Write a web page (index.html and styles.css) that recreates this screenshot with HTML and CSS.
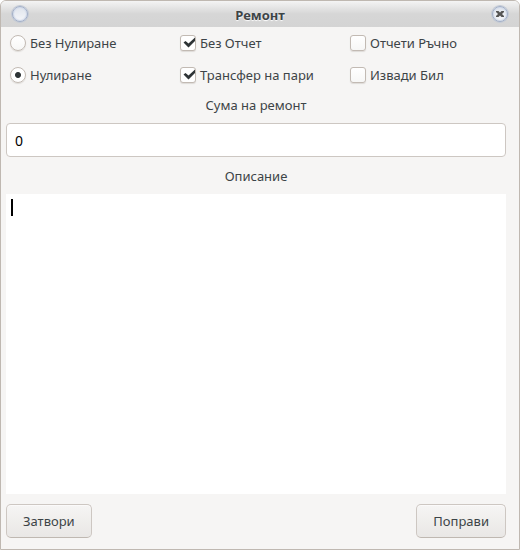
FILE: index.html
```html
<!DOCTYPE html>
<html lang="bg">
<head>
<meta charset="utf-8">
<title>Ремонт</title>
<link rel="stylesheet" href="styles.css">
</head>
<body>
<main class="window">
  <header class="titlebar">
    <button class="orb" type="button" aria-label="Меню"></button>
    <h1 class="title">Ремонт</h1>
    <button class="orb" type="button" aria-label="Затвори прозореца">
      <svg class="cross" viewBox="0 0 8 8" aria-hidden="true"><path d="M0 1H2.500L4 2.500L5.500 1H8V2L6 4L8 6V7H5.500L4 5.500L2.500 7H0V6L2 4L0 2Z"/></svg>
    </button>
  </header>
  <form class="form">
    <div class="options">
      <label class="option"><input class="mark radio" type="radio" name="reset">Без Нулиране</label>
      <label class="option"><input class="mark check" type="checkbox" checked>Без Отчет</label>
      <label class="option"><input class="mark check" type="checkbox">Отчети Ръчно</label>
      <label class="option"><input class="mark radio" type="radio" name="reset" checked>Нулиране</label>
      <label class="option"><input class="mark check" type="checkbox" checked>Трансфер на пари</label>
      <label class="option"><input class="mark check" type="checkbox">Извади Бил</label>
    </div>
    <label class="caption" for="amount">Сума на ремонт</label>
    <input class="amount" id="amount" type="text" value="0">
    <label class="caption caption-tall" for="description">Описание</label>
    <div class="editor">
      <textarea class="description" id="description"></textarea>
      <span class="caret"></span>
    </div>
    <footer class="actions">
      <button class="button" type="button">Затвори</button>
      <button class="button" type="button">Поправи</button>
    </footer>
  </form>
</main>
</body>
</html>
```
FILE: styles.css
```css
* {
  box-sizing: border-box;
}

body {
  margin: 0;
  background: #fff;
  color: #3d4447;
  font: 13px/18px "Noto Sans", sans-serif;
}

button,
input,
textarea {
  margin: 0;
  font: inherit;
  color: inherit;
}

.window {
  display: flex;
  flex-direction: column;
  min-height: 100vh;
  border: 1px solid #bfb8b1;
  border-radius: 6px 6px 0 0;
  background: #f6f5f4;
  overflow: hidden;
}

.titlebar {
  display: flex;
  align-items: center;
  justify-content: space-between;
  height: 26px;
  padding: 0 11px;
  background: linear-gradient(#f4f4f4, #d6d6d6 50%, #d4d4d4);
}

.title {
  margin: 0;
  padding-top: 2px;
  font-size: 13px;
  font-weight: 700;
  text-shadow: 0 1px 1px #fff;
}

.orb {
  display: flex;
  align-items: center;
  justify-content: center;
  width: 16px;
  height: 16px;
  padding: 0;
  border: 1px solid #a3b0c8;
  border-radius: 50%;
  background: linear-gradient(#dfe4ec, #f5f6f9);
  box-shadow: 0 0 0 1px #c3cad6, inset 0 0 1px 1px #d0d9e9;
}

.cross {
  flex: none;
  width: 8px;
  height: 8px;
  fill: #555;
}

.form {
  display: flex;
  flex: 1;
  flex-direction: column;
  padding: 0 13px 11px 5px;
}

.options {
  display: grid;
  grid-template-columns: 34% 34% 32%;
  grid-auto-rows: 32px;
}

.option {
  display: flex;
  align-items: center;
  gap: 4px;
  padding-left: 4px;
  white-space: nowrap;
}

.mark {
  appearance: none;
  flex: none;
  width: 16px;
  height: 16px;
  border: 1px solid #c2bab3;
  background: linear-gradient(#fff, #f7f7f6);
  box-shadow: 0 1px 1px #dedbd8;
}

.check {
  border-radius: 3px;
}

.radio {
  border-radius: 50%;
}

.check:checked {
  background: #fff url("data:image/svg+xml,%3Csvg xmlns='http://www.w3.org/2000/svg' viewBox='0 0 14 14'%3E%3Cpath d='M2.500 6.500L4.500 5L7.500 7.500L14 1.500V5L7.500 11.500Z' fill='%232e3436'/%3E%3C/svg%3E") center / 14px 14px no-repeat;
}

.radio:checked {
  background: radial-gradient(circle, #2e3436 2.500px, #fff 3.500px);
}

.caption {
  padding: 5px 0 9px;
  text-align: center;
}

.caption-tall {
  padding: 10px 0 9px;
}

.amount {
  width: 100%;
  height: 34px;
  padding: 0 8px;
  border: 1px solid #cdc7c2;
  border-radius: 4px;
  background: #fff;
  color: #000;
  font-size: 14px;
}

.editor {
  position: relative;
  display: flex;
  flex: 1;
  min-height: 120px;
}

.description {
  width: 100%;
  padding: 5px;
  border: 0;
  background: #fff;
  color: #000;
  outline: 0;
  resize: none;
}

.caret {
  position: absolute;
  top: 5px;
  left: 5px;
  width: 2px;
  height: 17px;
  background: #000;
}

.actions {
  display: flex;
  justify-content: space-between;
  padding-top: 10px;
}

.button {
  height: 34px;
  padding: 0 16px;
  border: 1px solid #cdc7c2;
  border-bottom-color: #bfb8b1;
  border-radius: 5px;
  background: linear-gradient(#f6f5f4, #e9e7e5);
  box-shadow: inset 0 1px #fbfafa;
}
```
